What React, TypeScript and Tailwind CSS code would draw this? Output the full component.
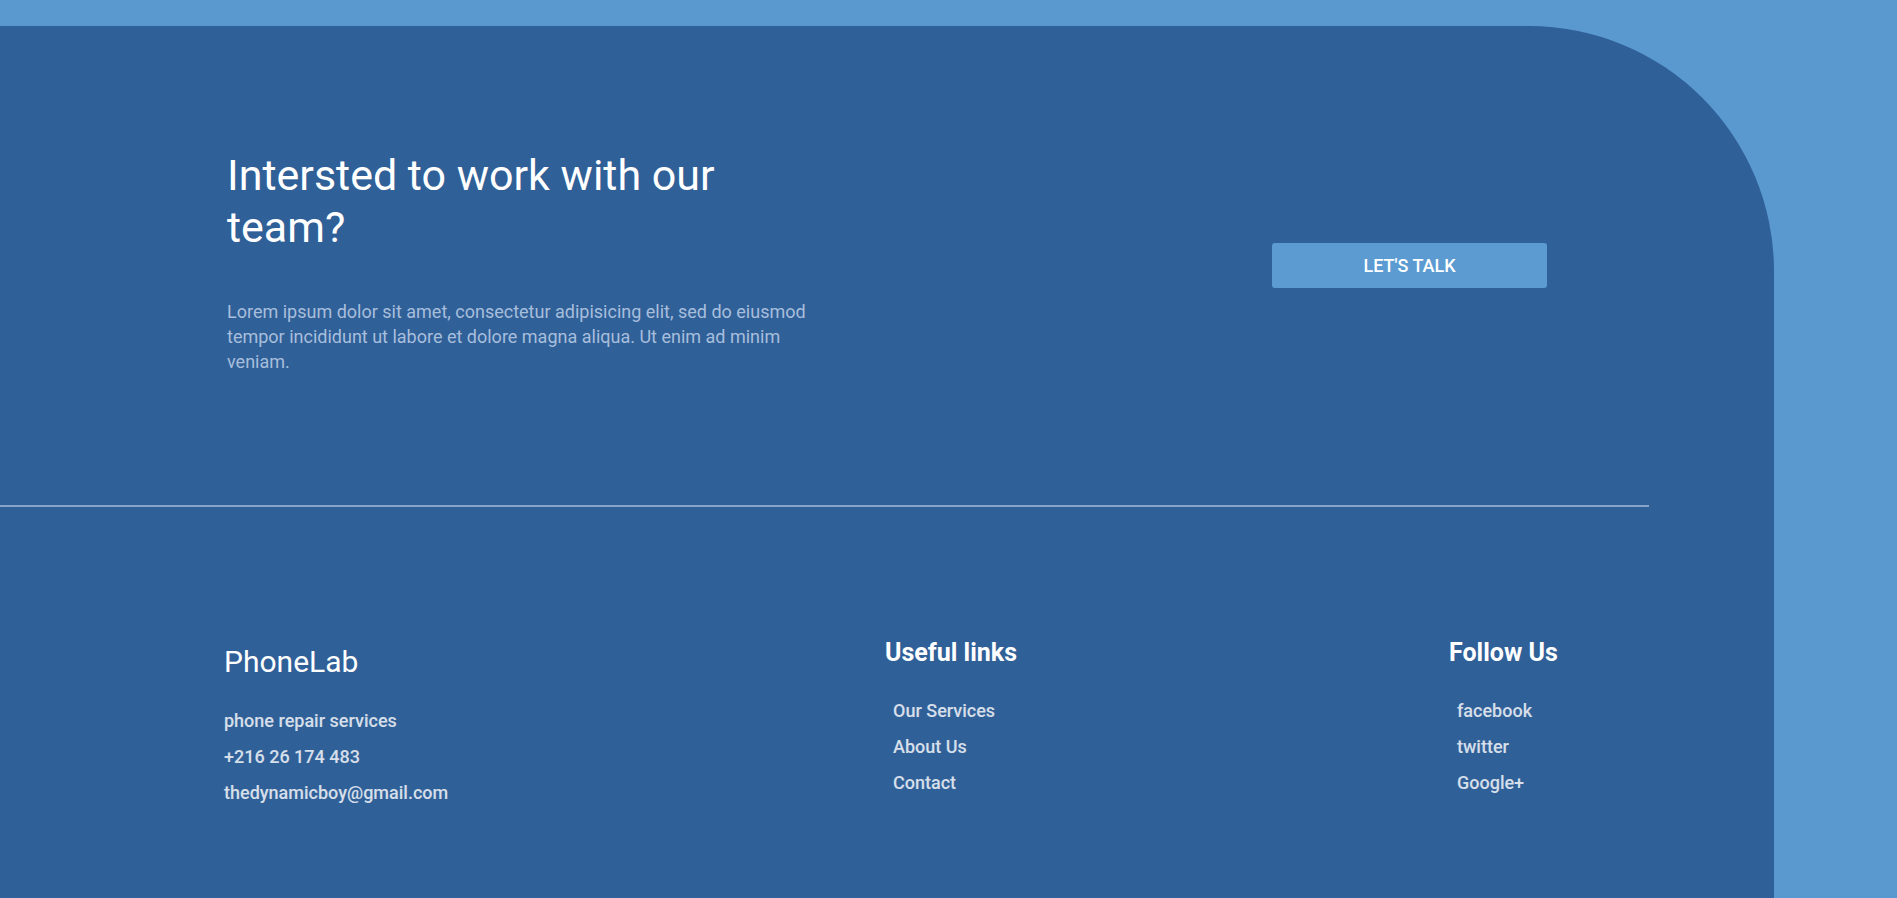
import React from "react";

const usefulLinks = ["Our Services", "About Us", "Contact"];
const socialLinks = ["facebook", "twitter", "Google+"];

const App = () => {
  return (
    <div className="min-h-screen overflow-hidden bg-[#5a99cf] pt-[26px] font-['Roboto',sans-serif]">
      <section className="w-[1774px] min-h-[872px] rounded-tr-[245px] bg-[#306098] pb-[80px]">
        {/* Call to action */}
        <div className="flex items-center justify-between pl-[227px] pr-[227px] pt-[123px] pb-[131px]">
          <div className="w-[600px]">
            <h2 className="text-[43px] font-normal leading-[52px] text-white">
              Intersted to work with our team?
            </h2>
            <p className="mt-[46px] text-[18px] leading-[25px] text-[#a7bedc]">
              Lorem ipsum dolor sit amet, consectetur adipisicing elit, sed do eiusmod tempor
              incididunt ut labore et dolore magna aliqua. Ut enim ad minim veniam.
            </p>
          </div>
          <a
            href="#contact"
            className="mt-[7px] flex h-[45px] w-[275px] items-center justify-center rounded-[3px] bg-[#5b9bd1] text-[18px] font-medium uppercase text-white"
          >
            Let's talk
          </a>
        </div>

        <div className="h-[2px] w-[1649px] bg-[#87a4c8]" />

        {/* Footer */}
        <div className="grid grid-cols-[661px_564px_1fr] pl-[224px] pt-[131px]">
          <div className="pt-[6px]">
            <h3 className="text-[30px] font-normal leading-[36px] text-white">PhoneLab</h3>
            <ul className="mt-[23px] text-[18px] font-medium leading-[36px] text-white/80">
              <li>phone repair services</li>
              <li>+216 26 174 483</li>
              <li>thedynamicboy@gmail.com</li>
            </ul>
          </div>
          <div>
            <h4 className="text-[25px] font-bold leading-[29px] text-white">Useful links</h4>
            <ul className="mt-[26px] pl-[8px] text-[18px] font-medium leading-[36px] text-white/80">
              {usefulLinks.map((l) => (
                <li key={l}>
                  <a href="#">{l}</a>
                </li>
              ))}
            </ul>
          </div>
          <div>
            <h4 className="text-[25px] font-bold leading-[29px] text-white">Follow Us</h4>
            <ul className="mt-[26px] pl-[8px] text-[18px] font-medium leading-[36px] text-white/80">
              {socialLinks.map((l) => (
                <li key={l}>
                  <a href="#">{l}</a>
                </li>
              ))}
            </ul>
          </div>
        </div>
      </section>
    </div>
  );
};

export default App;
